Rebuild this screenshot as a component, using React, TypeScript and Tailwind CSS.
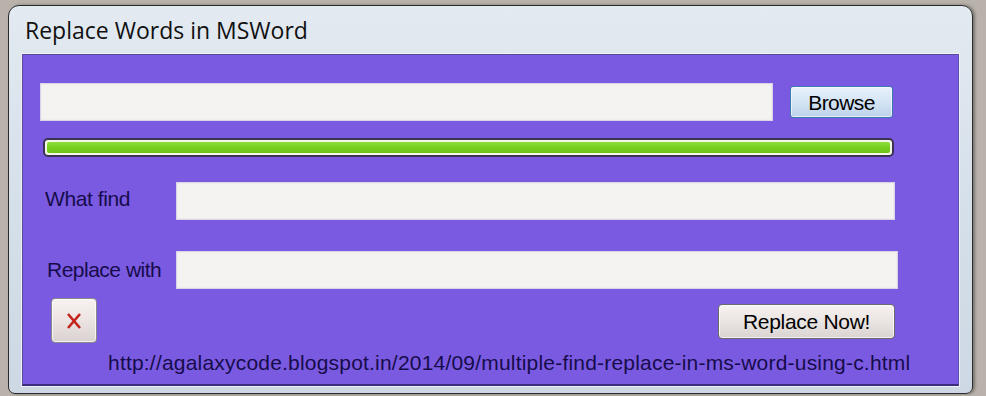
const font = { fontFamily: '"Liberation Sans", Arial, sans-serif' };

function TextBox({ className }: { className: string }) {
  return (
    <div
      className={`h-[38px] bg-[#f5f3f2] border border-[#d9d4ea] shadow-[inset_0_0_2px_rgba(0,0,0,0.08)] ${className}`}
    />
  );
}

export default function App() {
  return (
    <div className="w-[986px] h-[396px] bg-[#b9b2ab] overflow-hidden pt-[5px] pl-[8px]">
      <div className="w-[965px] h-[389px] rounded-t-[11px] rounded-b-[7px] border border-[#2b2b2b] bg-gradient-to-b from-[#e3eaf1] via-[#d6e0ea] to-[#cdd8e4] shadow-[2px_0_3px_rgba(0,0,0,0.35)] flex flex-col px-[13px] pb-[7px]">
        <div
          className="h-[48px] flex items-center pl-[3px] text-[23px] tracking-[0px] text-[#111]"
          style={{ fontFamily: '"Open Sans", "Noto Sans", sans-serif' }}
        >
          Replace Words in MSWord
        </div>
        <div
          className="flex-1 bg-[#7b5ae2] border-t border-l border-[#5a4a9a] border-b-2 border-r border-b-[#3b2d7a] border-r-[#5e4eb0] shadow-[0_0_0_1px_#eef2f7] flex flex-col text-[#160c4a]"
          style={font}
        >
          <div className="flex items-center mt-[28px] ml-[17px]">
            <TextBox className="w-[733px]" />
            <button className="ml-[17px] w-[103px] h-[32px] rounded-[3px] border border-[#3d78b0] bg-gradient-to-b from-[#e8f1fa] via-[#d4e4f4] to-[#bcd2ea] text-[21px] leading-none text-black tracking-[-0.6px] shadow-[inset_0_0_0_1px_rgba(255,255,255,0.6)]">
              Browse
            </button>
          </div>

          <div className="mt-[17px] ml-[20px] w-[851px] h-[19px] rounded-[5px] border-2 border-[#3a3450] bg-[#f6f6e8] p-[2px]">
            <div className="w-full h-full rounded-[2px] bg-gradient-to-b from-[#8fe03a] via-[#76cf1d] to-[#6cc417]" />
          </div>

          <div className="flex items-center mt-[25px]">
            <div className="w-[153px] pl-[22px] text-[21px] tracking-[-0.4px] -mt-[4px]">What find</div>
            <TextBox className="w-[719px]" />
          </div>

          <div className="flex items-center mt-[31px]">
            <div className="w-[153px] pl-[24px] text-[21px] tracking-[-0.5px] -mt-[1px]">Replace with</div>
            <TextBox className="w-[722px]" />
          </div>

          <div className="flex items-start mt-[9px]">
            <button className="ml-[28px] w-[46px] h-[45px] rounded-[4px] border border-[#8a8a8a] bg-gradient-to-b from-[#f6f1ef] via-[#ece4e2] to-[#d9d2d0] shadow-[inset_0_0_0_1px_rgba(255,255,255,0.7)] flex items-center justify-center">
              <svg width="22" height="22" viewBox="0 0 22 22">
                <path d="M5 4 L17 18 M17 4 L5 18" stroke="#c4231b" strokeWidth="2.6" strokeLinecap="butt" />
              </svg>
            </button>
            <button className="ml-[621px] mt-[6px] w-[177px] h-[35px] rounded-[4px] border border-[#6b6b6b] bg-gradient-to-b from-[#f7f3f1] via-[#eae4e2] to-[#d9d3d1] shadow-[inset_0_0_0_1px_rgba(255,255,255,0.7)] text-[21px] leading-none text-black tracking-[-0.3px]">
              Replace Now!
            </button>
          </div>

          <div className="ml-[85px] mt-[8px] text-[21px] leading-[24px] tracking-[0.2px] whitespace-nowrap">
            http://agalaxycode.blogspot.in/2014/09/multiple-find-replace-in-ms-word-using-c.html
          </div>
        </div>
      </div>
    </div>
  );
}
